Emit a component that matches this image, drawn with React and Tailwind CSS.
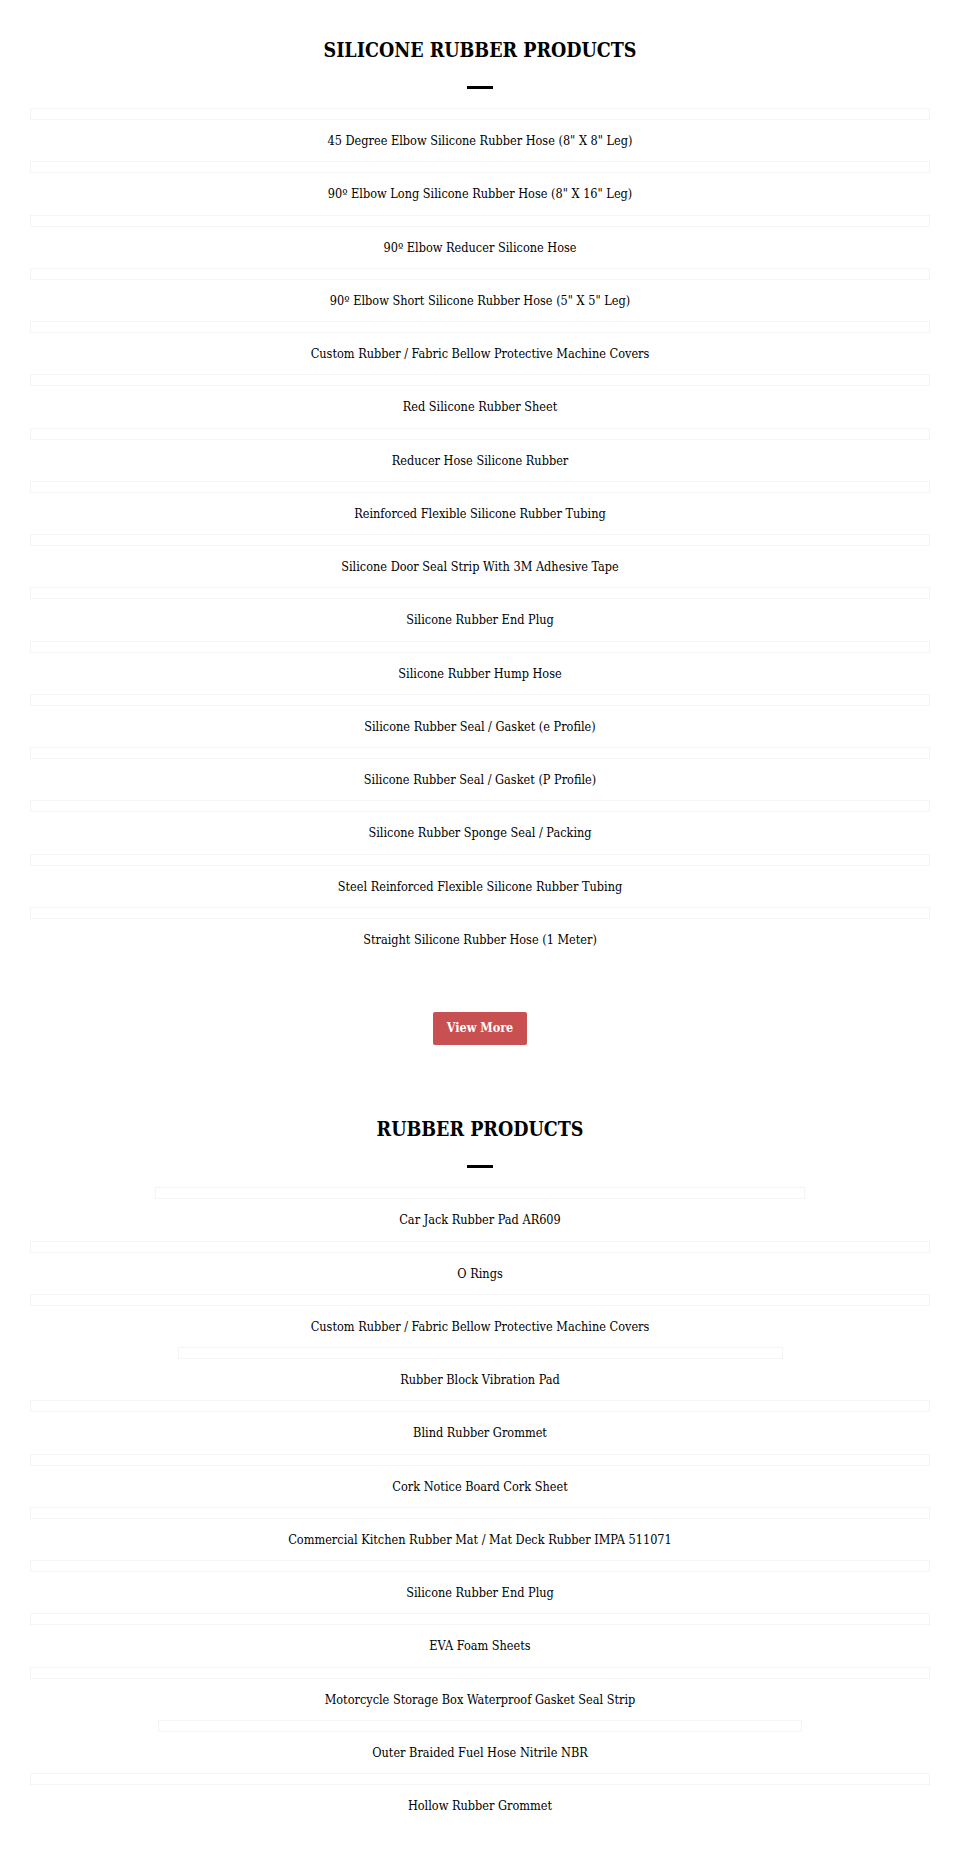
import React from 'react';

const siliconeProducts = [
  '45 Degree Elbow Silicone Rubber Hose (8" X 8" Leg)',
  '90º Elbow Long Silicone Rubber Hose (8" X 16" Leg)',
  '90º Elbow Reducer Silicone Hose',
  '90º Elbow Short Silicone Rubber Hose (5" X 5" Leg)',
  'Custom Rubber / Fabric Bellow Protective Machine Covers',
  'Red Silicone Rubber Sheet',
  'Reducer Hose Silicone Rubber',
  'Reinforced Flexible Silicone Rubber Tubing',
  'Silicone Door Seal Strip With 3M Adhesive Tape',
  'Silicone Rubber End Plug',
  'Silicone Rubber Hump Hose',
  'Silicone Rubber Seal / Gasket (e Profile)',
  'Silicone Rubber Seal / Gasket (P Profile)',
  'Silicone Rubber Sponge Seal / Packing',
  'Steel Reinforced Flexible Silicone Rubber Tubing',
  'Straight Silicone Rubber Hose (1 Meter)',
];

// frame = width of the thumbnail box when it is not full width
const rubberProducts = [
  { name: 'Car Jack Rubber Pad AR609', frame: 'w-[650px]' },
  { name: 'O Rings' },
  { name: 'Custom Rubber / Fabric Bellow Protective Machine Covers' },
  { name: 'Rubber Block Vibration Pad', frame: 'w-[605px]' },
  { name: 'Blind Rubber Grommet' },
  { name: 'Cork Notice Board Cork Sheet' },
  { name: 'Commercial Kitchen Rubber Mat / Mat Deck Rubber IMPA 511071' },
  { name: 'Silicone Rubber End Plug' },
  { name: 'EVA Foam Sheets' },
  { name: 'Motorcycle Storage Box Waterproof Gasket Seal Strip' },
  { name: 'Outer Braided Fuel Hose Nitrile NBR', frame: 'w-[644px]' },
  { name: 'Hollow Rubber Grommet' },
];

function SectionTitle({ children }) {
  return (
    <div className="flex flex-col items-center">
      <h2 className="text-[19.5px] leading-[24px] font-bold text-black">{children}</h2>
      <span className="mt-[23px] block h-[3px] w-[26px] bg-black" />
    </div>
  );
}

function ProductItem({ name, frame }) {
  return (
    <a href="#" className="flex h-[53.27px] flex-col items-center">
      <div className={`h-[12px] border border-[#f4f4f4] ${frame || 'w-full'}`} />
      <span className="mt-[11px] text-[12.6px] leading-[20px] text-black whitespace-nowrap">{name}</span>
    </a>
  );
}

export default function App() {
  return (
    <div
      className="min-h-screen bg-white"
      style={{ fontFamily: '"DejaVu Serif Condensed", "DejaVu Serif", "Liberation Serif", serif' }}
    >
      <div className="mx-auto w-[900px] pt-[39px] pb-[50px]">
        <section>
          <SectionTitle>SILICONE RUBBER PRODUCTS</SectionTitle>
          <div className="mt-[19px] flex flex-col">
            {siliconeProducts.map((name) => (
              <ProductItem key={name} name={name} />
            ))}
          </div>
          <div className="mt-[52px] flex justify-center">
            <button className="h-[33px] w-[94px] rounded-[2px] bg-[#c95051] text-[12.5px] font-bold text-white">
              View More
            </button>
          </div>
        </section>

        <section className="mt-[73px]">
          <SectionTitle>RUBBER PRODUCTS</SectionTitle>
          <div className="mt-[19px] flex flex-col">
            {rubberProducts.map((p, i) => (
              <ProductItem key={p.name + i} name={p.name} frame={p.frame} />
            ))}
          </div>
        </section>
      </div>
    </div>
  );
}
